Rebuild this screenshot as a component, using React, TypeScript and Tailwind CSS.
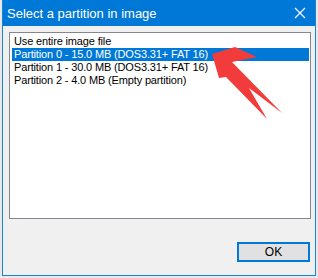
const rows = [
  'Use entire image file',
  'Partition 0 - 15.0 MB (DOS3.31+ FAT 16)',
  'Partition 1 - 30.0 MB (DOS3.31+ FAT 16)',
  'Partition 2 - 4.0 MB (Empty partition)',
]

export default function App() {
  const selected = 1
  return (
    <div className="relative w-[318px] h-[278px] bg-[#e9e9e9] overflow-hidden" style={{ fontFamily: '"Liberation Sans", Arial, sans-serif' }}>
      <div className="ml-[2px] w-[314px] h-[276px] flex flex-col bg-[#f0f0f0] border-x border-b border-[#1883d7]">
        {/* Title bar */}
        <div className="h-[26px] flex items-center justify-between bg-[#0078d7] text-white">
          <span className="pl-[4px] text-[13px] leading-none">Select a partition in image</span>
          <svg width="12" height="12" viewBox="0 0 12 12" className="mr-[9px]" stroke="white" strokeWidth="1.2">
            <path d="M1 1l10 10M11 1L1 11" />
          </svg>
        </div>

        {/* Body */}
        <div className="flex flex-col">
          <div className="mt-[6px] ml-[6px] w-[302px] h-[187px] bg-white border border-[#828790] pl-[2px] pr-[1px] pt-[2px]">
            {rows.map((r, i) => (
              <div
                key={r}
                className={`h-[13px] pl-[2px] text-[11px] leading-[13px] tracking-[-0.15px] whitespace-nowrap ${i === selected ? 'bg-[#0078d7] text-white' : 'text-black'}`}
              >
                {r}
              </div>
            ))}
          </div>

          <div className="flex justify-end pr-[5px] mt-[23px]">
            <button className="w-[73px] h-[20px] border-2 border-[#0078d7] bg-[#e1e1e1] text-[12px] text-black leading-none">
              OK
            </button>
          </div>
        </div>
      </div>

      {/* red arrow annotation */}
      <svg className="absolute left-0 top-0" width="318" height="278" viewBox="0 0 318 278">
        <polygon
          points="212,54 235,47 257,57 232,62 282,113 249,88 267,119 226,77 219,78"
          fill="#f23c3c"
        />
      </svg>
    </div>
  )
}
